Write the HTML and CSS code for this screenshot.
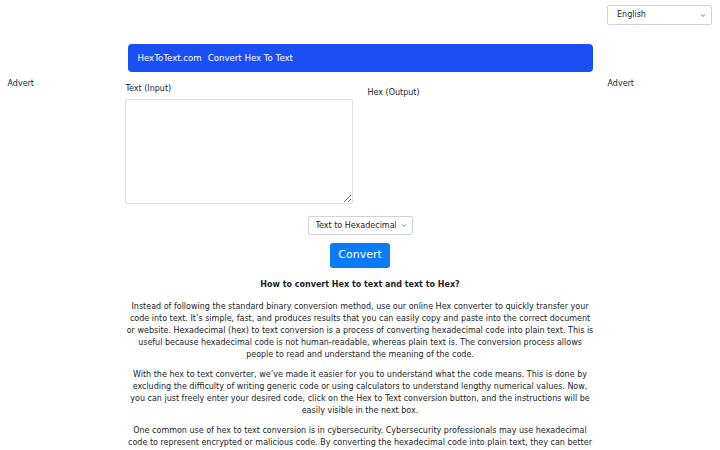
FILE: index.html
```html
<!DOCTYPE html>
<html lang="en">
<head>
<meta charset="UTF-8" />
<meta name="viewport" content="width=device-width, initial-scale=1" />
<title>Convert Hex To Text</title>
<link rel="stylesheet" href="styles.css">
</head>
<body>

<div class="top-bar">
  <select class="lang-select">
    <option>English</option>
  </select>
</div>

<div class="layout">
  <div class="side">
    <p class="advert">Advert</p>
  </div>

  <div class="main">
    <div class="brand-bar">
      <span class="brand">HexToText.com</span>
      <span class="brand-title">Convert Hex To Text</span>
    </div>

    <div class="io-row">
      <div class="io-col">
        <label class="io-label" for="input">Text (Input)</label>
        <textarea class="io-box" id="input"></textarea>
      </div>
      <div class="io-col">
        <label class="io-label output-label">Hex (Output)</label>
      </div>
    </div>

    <div class="actions">
      <select class="mode-select">
        <option>Text to Hexadecimal</option>
        <option>Hexadecimal to Text</option>
      </select>
      <button class="convert-btn">Convert</button>
    </div>

    <div class="article">
      <h3>How to convert Hex to text and text to Hex?</h3>
      <p>Instead of following the standard binary conversion method, use our online Hex converter to quickly transfer your code into text. It’s simple, fast, and produces results that you can easily copy and paste into the correct document or website. Hexadecimal (hex) to text conversion is a process of converting hexadecimal code into plain text. This is useful because hexadecimal code is not human-readable, whereas plain text is. The conversion process allows people to read and understand the meaning of the code.</p>
      <p>With the hex to text converter, we’ve made it easier for you to understand what the code means. This is done by excluding the difficulty of writing generic code or using calculators to understand lengthy numerical values. Now, you can just freely enter your desired code, click on the Hex to Text conversion button, and the instructions will be easily visible in the next box.</p>
      <p>One common use of hex to text conversion is in cybersecurity. Cybersecurity professionals may use hexadecimal code to represent encrypted or malicious code. By converting the hexadecimal code into plain text, they can better understand what the code is doing and take the necessary steps to protect their systems.</p>
    </div>
  </div>

  <div class="side">
    <p class="advert">Advert</p>
  </div>
</div>

</body>
</html>
```

FILE: styles.css
```css
body {
  margin: 0;
  font-family: "DejaVu Sans", Verdana, sans-serif;
  font-size: 8px;
  line-height: 12px;
  color: #212529;
  background: #fff;
}

.top-bar {
  display: flex;
  justify-content: flex-end;
  padding: 5px 8px 0 0;
}

select {
  appearance: none;
  -webkit-appearance: none;
  font-family: inherit;
  font-size: 8px;
  line-height: 12px;
  color: #212529;
  background-color: #fff;
  background-image: url("data:image/svg+xml,%3csvg xmlns='http://www.w3.org/2000/svg' viewBox='0 0 16 16'%3e%3cpath fill='none' stroke='%23343a40' stroke-linecap='round' stroke-linejoin='round' stroke-width='2' d='m2 5 6 6 6-6'/%3e%3c/svg%3e");
  background-repeat: no-repeat;
  background-position: right 5px center;
  background-size: 6px 5px;
  border: 1px solid #ced4da;
  border-radius: 2px;
  padding: 3px 18px 3px 8px;
  margin: 0;
  box-sizing: border-box;
}

.lang-select {
  width: 105px;
  height: 20px;
  padding-left: 9px;
}

.layout {
  display: grid;
  grid-template-columns: 120px 1fr 120px;
  margin-top: 19px;
}

.side {
  padding: 0 7.5px;
}

.advert {
  margin: 34px 0 0;
}

.main {
  padding: 0 7.5px;
}

.brand-bar {
  background: #1a4ff5;
  color: #fff;
  border-radius: 4px;
  height: 28px;
  display: flex;
  align-items: center;
  padding: 0 10px;
  font-size: 8.6px;
  gap: 6px;
}

.io-row {
  display: flex;
  margin: 11px -2px 0 -2px;
}

.io-col {
  flex: 1;
  display: flex;
  flex-direction: column;
  padding-right: 15px;
}

.io-col + .io-col {
  padding-right: 0;
}

.io-label {
  display: block;
  margin-bottom: 4px;
}

.output-label {
  margin-top: 4px;
}

.io-box {
  width: 228px;
  height: 105px;
  box-sizing: border-box;
  border: 1px solid #dee2e6;
  border-radius: 2px;
  font-family: inherit;
  font-size: 8px;
  padding: 4px;
  margin: 0 0 0 -1px;
}

.actions {
  display: flex;
  flex-direction: column;
  align-items: center;
  margin-top: 12px;
  gap: 8px;
}

.mode-select {
  width: 105px;
  height: 19px;
  padding: 2px 16px 2px 7px;
}

.convert-btn {
  background: #0a7bf7;
  color: #fff;
  border: none;
  border-radius: 3px;
  font-family: inherit;
  font-size: 11px;
  line-height: 16px;
  padding: 4px 8.5px 5px;
  height: 25px;
  cursor: pointer;
}

.article {
  text-align: center;
  margin: 11px -2px 0;
}

.article h3 {
  font-size: 8px;
  font-weight: bold;
  line-height: 12px;
  margin: 0 0 10px;
}

.article p {
  margin: 0 0 8px;
}
```
